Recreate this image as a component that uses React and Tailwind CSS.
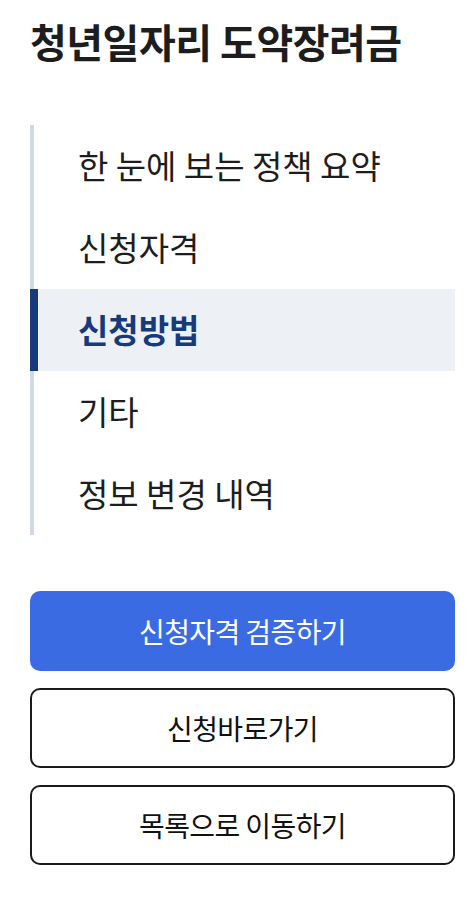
import React from 'react';

const items = ['한 눈에 보는 정책 요약', '신청자격', '신청방법', '기타', '정보 변경 내역'];

const App = () => {
    const active = 2;

    return (
        <div className="min-h-screen bg-white pt-[17px] pl-[30px] pr-[19px] font-['Noto_Sans_CJK_KR','Noto_Sans',sans-serif] text-[#1d1d1d]">
            <h1 className="text-[40px] font-bold leading-[48px] tracking-[-0.5px]">청년일자리 도약장려금</h1>

            <nav className="mt-[60px] border-l-4 border-[#d0dae6]">
                {items.map((item, i) =>
                    i === active ? (
                        <div
                            key={item}
                            className="-ml-1 flex h-[82px] items-center border-l-8 border-[#173a7b] bg-[#edf0f5] pl-[40px] text-[33px] font-bold text-[#173a7b]"
                        >
                            {item}
                        </div>
                    ) : (
                        <div key={item} className="flex h-[82px] items-center pl-[44px] text-[33px] text-[#1d1d1d]">
                            {item}
                        </div>
                    )
                )}
            </nav>

            <div className="mt-[56px] flex flex-col gap-[17px]">
                <button className="h-[80px] w-full rounded-[10px] bg-[#3b6be3] text-[28px] font-normal tracking-[-0.6px] text-white">
                    신청자격 검증하기
                </button>
                <button className="h-[80px] w-full rounded-[10px] border-2 border-[#1a1a1a] bg-white text-[28px] font-normal tracking-[-0.6px] text-[#111]">
                    신청바로가기
                </button>
                <button className="h-[80px] w-full rounded-[10px] border-2 border-[#1a1a1a] bg-white text-[28px] font-normal tracking-[-0.6px] text-[#111]">
                    목록으로 이동하기
                </button>
            </div>
        </div>
    );
};

export default App;
